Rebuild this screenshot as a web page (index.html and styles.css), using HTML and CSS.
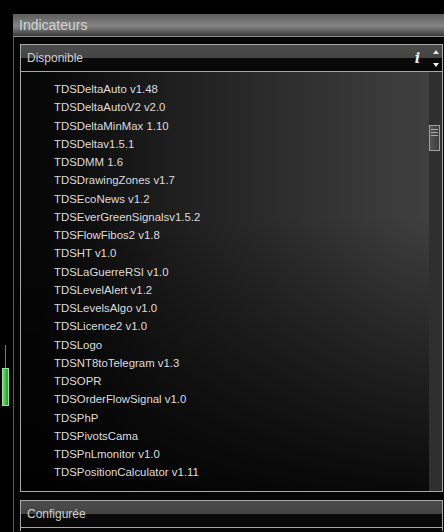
FILE: index.html
```
<!DOCTYPE html>
<html>
<head>
<meta charset="utf-8">
<link rel="stylesheet" href="styles.css">
</head>
<body>
<div class="gutter">
  <div class="gauge-line"></div>
  <div class="gauge"></div>
</div>
<div class="window">
  <div class="titlebar">Indicateurs</div>
  <div class="panel">
    <div class="box">
      <div class="box-header">
        <span class="box-title">Disponible</span>
        <span class="info">i</span>
        <span class="arrows">
          <span class="arrow up"></span>
          <span class="arrow down"></span>
        </span>
      </div>
      <div class="list-area">
        <ul class="list">
          <li>TDSDeltaAuto v1.48</li>
          <li>TDSDeltaAutoV2 v2.0</li>
          <li>TDSDeltaMinMax 1.10</li>
          <li>TDSDeltav1.5.1</li>
          <li>TDSDMM 1.6</li>
          <li>TDSDrawingZones v1.7</li>
          <li>TDSEcoNews v1.2</li>
          <li>TDSEverGreenSignalsv1.5.2</li>
          <li>TDSFlowFibos2 v1.8</li>
          <li>TDSHT v1.0</li>
          <li>TDSLaGuerreRSI v1.0</li>
          <li>TDSLevelAlert v1.2</li>
          <li>TDSLevelsAlgo v1.0</li>
          <li>TDSLicence2 v1.0</li>
          <li>TDSLogo</li>
          <li>TDSNT8toTelegram v1.3</li>
          <li>TDSOPR</li>
          <li>TDSOrderFlowSignal v1.0</li>
          <li>TDSPhP</li>
          <li>TDSPivotsCama</li>
          <li>TDSPnLmonitor v1.0</li>
          <li>TDSPositionCalculator v1.11</li>
        </ul>
        <div class="scrollbar"><div class="thumb"><span></span><span></span><span></span></div></div>
      </div>
    </div>
    <div class="box box2">
      <div class="box-header">
        <span class="box-title">Configurée</span>
      </div>
      <div class="list-area small"></div>
    </div>
  </div>
</div>
</body>
</html>
```
FILE: styles.css
```
html, body {
  margin: 0;
  padding: 0;
  background: #000;
  height: 532px;
  overflow: hidden;
}
body {
  display: flex;
  font-family: "Liberation Sans", Arial, sans-serif;
}
.gutter {
  width: 13px;
  flex: none;
  padding-top: 345px;
  box-sizing: border-box;
}
.gauge-line {
  width: 1px;
  height: 23px;
  margin-left: 5px;
  background: #7a7a7a;
}
.gauge {
  width: 5px;
  height: 36px;
  margin-left: 2px;
  border: 1px solid #9be39b;
  background: linear-gradient(to right, #6fdc6f, #3cb43c 60%, #2f952f);
}
.window {
  flex: 1;
  padding-top: 14px;
  height: 532px;
  box-sizing: border-box;
  display: flex;
  flex-direction: column;
}
.titlebar {
  height: 22px;
  line-height: 22px;
  padding-left: 6px;
  font-size: 14px;
  color: #d4d4d4;
  background: linear-gradient(to bottom, #5e5e5e 0%, #6e6e6e 25%, #858585 55%, #5a5a5a 80%, #3a3a3a 100%);
  border-bottom: 1px solid #8e8e8e;
}
.panel {
  flex: 1;
  border-left: 1px solid #5c5c5c;
  padding: 7px 1px 0 6px;
  background: #050505;
}
.box {
  border: 1px solid #a9a9a9;
}
.box2 {
  margin-top: 8px;
  border-bottom: none;
}
.box-header {
  height: 26px;
  display: flex;
  align-items: center;
  background: linear-gradient(to bottom, #4b4b4b 0%, #444 50%, #0c0c0c 50%, #050505 100%);
  border-bottom: 1px solid #a9a9a9;
}
.box-title {
  flex: 1;
  padding-left: 6px;
  font-size: 12px;
  color: #cfcfcf;
}
.info {
  font-family: "DejaVu Serif", serif;
  font-style: italic;
  font-weight: bold;
  font-size: 14px;
  color: #eee;
  margin-right: 9px;
}
.arrows {
  width: 13px;
  align-self: stretch;
  display: flex;
  flex-direction: column;
}
.arrow {
  flex: 1;
  display: flex;
  align-items: center;
  justify-content: center;
}
.arrow::after {
  content: "";
  width: 0;
  height: 0;
  border-left: 3.5px solid transparent;
  border-right: 3.5px solid transparent;
}
.up::after {
  border-bottom: 4px solid #e6e6e6;
}
.down::after {
  border-top: 4px solid #f4f4f4;
}
.list-area {
  height: 419px;
  display: flex;
  background:
    linear-gradient(to bottom, rgba(0,0,0,0) 35%, rgba(0,0,0,0.85) 100%),
    linear-gradient(to right, #070707 5%, #1e1e1e 35%, #3a3a3a 85%, #404040 100%);
}
.list-area.small {
  height: 3px;
  background: #050505;
}
.list {
  flex: 1;
  list-style: none;
  margin: 0;
  padding: 8px 0 0 33px;
}
.list li {
  height: 18.25px;
  line-height: 18.25px;
  font-size: 11.4px;
  color: #dcdcdc;
  white-space: nowrap;
}
.scrollbar {
  width: 13px;
  background: #2f2f2f;
  padding-top: 53px;
  box-sizing: border-box;
}
.thumb {
  width: 11px;
  height: 26px;
  border: 1px solid #a0a0a0;
  background: linear-gradient(to right, #555, #3c3c3c);
  display: flex;
  flex-direction: column;
  align-items: center;
  padding-top: 3px;
  box-sizing: border-box;
  gap: 2px;
}
.thumb span {
  width: 7px;
  height: 1px;
  background: #aaa;
}
```
